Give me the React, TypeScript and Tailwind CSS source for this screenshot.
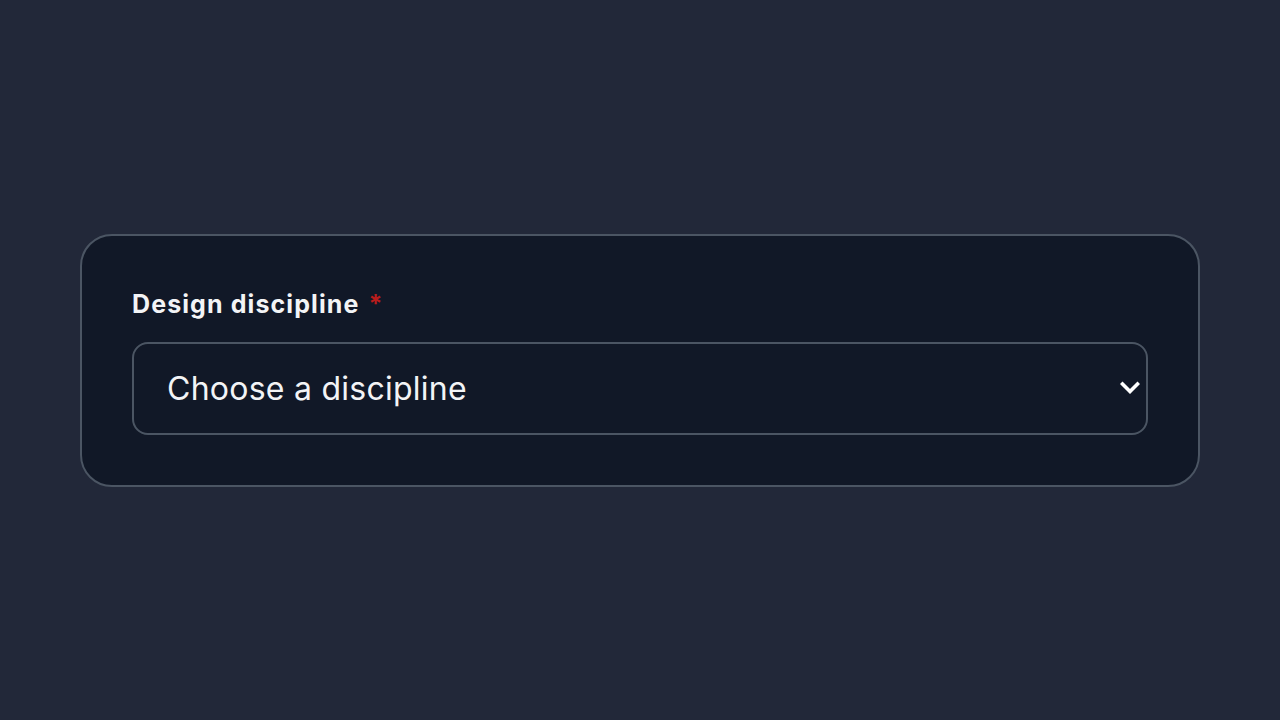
import React from "react";

export default function App() {
  return (
    <div
      className="w-full h-[720px] bg-[#222839] flex items-center justify-center"
      style={{ fontFamily: "Inter, 'Noto Sans', sans-serif" }}
    >
      <div className="w-[1120px] h-[253px] bg-[#111827] border-2 border-[#4b5563] rounded-[32px] px-[50px] pt-[53px]">
        <div className="flex items-center gap-[9px] h-[32px] text-[25px] font-bold text-[#f3f4f6] tracking-[1.1px]">
          <span>Design discipline</span>
          <span className="text-[#b91c1c]">*</span>
        </div>
        <div className="mt-[21px] h-[93px] border-2 border-[#4b5563] rounded-[16px] flex items-center justify-between pl-[33px] pr-[6px]">
          <span className="text-[32px] text-[#f3f4f6] tracking-[0.25px] translate-y-[1px]">Choose a discipline</span>
          <svg width="20" height="14" viewBox="0 0 20 14" fill="none">
            <path d="M2.5 3 L10 10.5 L17.5 3" stroke="#ffffff" strokeWidth="3.6" strokeLinecap="square" />
          </svg>
        </div>
      </div>
    </div>
  );
}
